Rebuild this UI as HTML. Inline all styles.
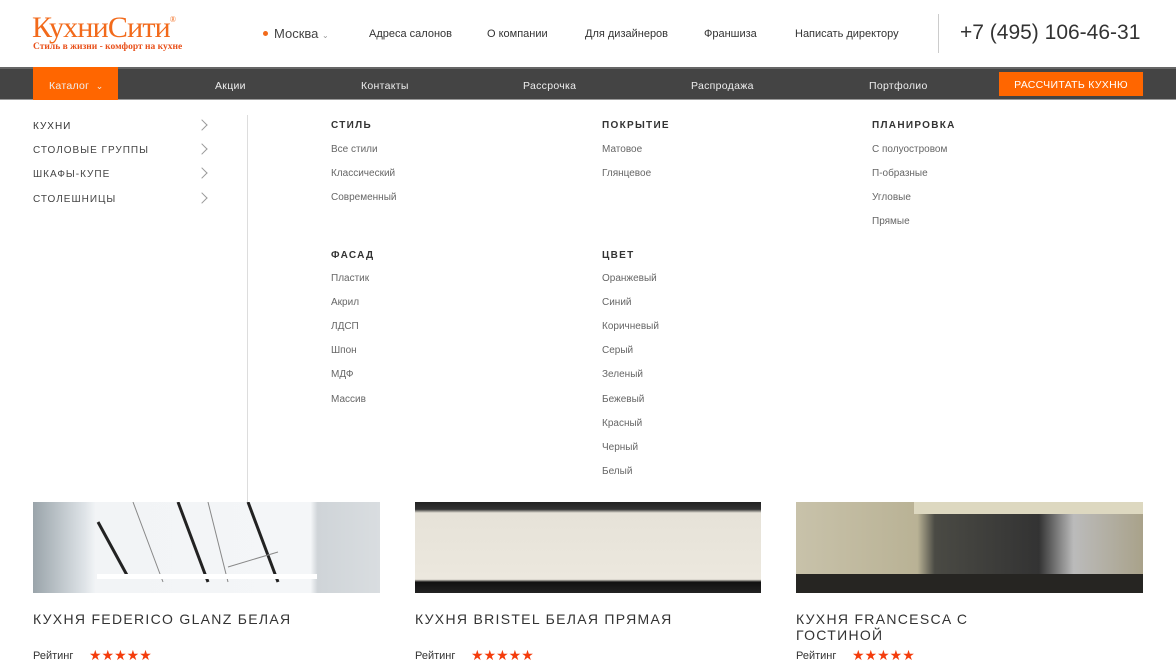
<!DOCTYPE html>
<html><head><meta charset="utf-8"><style>
*{margin:0;padding:0;box-sizing:border-box}
body{width:1176px;height:669px;overflow:hidden;background:#fff;font-family:"Liberation Sans",sans-serif;color:#333;position:relative}
.a{position:absolute;white-space:nowrap}
.top{font-size:11px;color:#333;top:28px}
.nav{position:absolute;top:67px;left:0;width:1176px;height:33px;background:#444;border-top:2px solid #666;border-bottom:1px solid #999}
.nav .a{color:#eee;font-size:10.5px;top:10px;letter-spacing:.3px}
.l{font-size:10px;color:#444;letter-spacing:1px}
.h{font-size:10px;font-weight:bold;letter-spacing:1.3px;color:#333}
.i{font-size:10px;color:#666}
.chev{position:absolute;width:8px;height:8px;border-right:1.5px solid #999;border-top:1.5px solid #999;transform:rotate(45deg)}
.t{font-size:14px;letter-spacing:1.3px;color:#333;top:611px}
.r{font-size:11px;color:#333;top:650px}
.st{color:#f43c0c;font-size:14px;letter-spacing:0;top:647px}
</style></head><body>
<div class="a" style="left:32px;top:11px;font-family:'Liberation Serif',serif;font-size:30px;color:#f26a1b;letter-spacing:-.8px">КухниСити<sup style="font-size:8px;vertical-align:top;position:relative;top:4px">®</sup></div>
<div class="a" style="left:33px;top:42px;font-family:'Liberation Serif',serif;font-size:9.5px;font-weight:bold;color:#e8501a">Стиль в жизни - комфорт на кухне</div>
<div class="a" style="left:263px;top:31px;width:5px;height:5px;border-radius:50%;background:#f26a1b"></div>
<div class="a" style="left:274px;top:26px;font-size:13px;color:#444">Москва <span style="font-size:8px;color:#999">⌄</span></div>
<div class="a top" style="left:369px">Адреса салонов</div>
<div class="a top" style="left:487px">О компании</div>
<div class="a top" style="left:585px">Для дизайнеров</div>
<div class="a top" style="left:704px">Франшиза</div>
<div class="a top" style="left:795px">Написать директору</div>
<div class="a" style="left:938px;top:14px;width:1px;height:39px;background:#ccc"></div>
<div class="a" style="left:960px;top:21px;font-size:21px;color:#333">+7 (495) 106-46-31</div>
<div class="nav">
<div class="a" style="left:33px;top:-2px;width:85px;height:33px;background:#ff6600"></div>
<div class="a" style="left:49px;top:11px">Каталог &nbsp;<span style="font-size:9px">⌄</span></div>
<div class="a" style="left:215px;top:11px">Акции</div>
<div class="a" style="left:361px;top:11px">Контакты</div>
<div class="a" style="left:523px;top:11px">Рассрочка</div>
<div class="a" style="left:691px;top:11px">Распродажа</div>
<div class="a" style="left:869px;top:11px">Портфолио</div>
<div class="a" style="left:999px;top:3px;width:144px;height:24px;background:#ff6600;color:#fff;font-size:10.5px;text-align:center;line-height:26px;letter-spacing:.3px">РАССЧИТАТЬ КУХНЮ</div>
</div>
<div class="a l" style="left:33px;top:121px;color:#333">КУХНИ</div>
<div class="a l" style="left:33px;top:145px">СТОЛОВЫЕ ГРУППЫ</div>
<div class="a l" style="left:33px;top:169px">ШКАФЫ-КУПЕ</div>
<div class="a l" style="left:33px;top:194px">СТОЛЕШНИЦЫ</div>
<div class="chev" style="left:198px;top:121px"></div>
<div class="chev" style="left:198px;top:145px"></div>
<div class="chev" style="left:198px;top:169px"></div>
<div class="chev" style="left:198px;top:194px"></div>
<div class="a" style="left:247px;top:115px;width:1px;height:387px;background:#ddd"></div>
<div class="a h" style="left:331px;top:120px">СТИЛЬ</div>
<div class="a i" style="left:331px;top:144px">Все стили</div>
<div class="a i" style="left:331px;top:168px">Классический</div>
<div class="a i" style="left:331px;top:192px">Современный</div>
<div class="a h" style="left:331px;top:250px">ФАСАД</div>
<div class="a i" style="left:331px;top:273px">Пластик</div>
<div class="a i" style="left:331px;top:297px">Акрил</div>
<div class="a i" style="left:331px;top:321px">ЛДСП</div>
<div class="a i" style="left:331px;top:345px">Шпон</div>
<div class="a i" style="left:331px;top:369px">МДФ</div>
<div class="a i" style="left:331px;top:394px">Массив</div>
<div class="a h" style="left:602px;top:120px">ПОКРЫТИЕ</div>
<div class="a i" style="left:602px;top:144px">Матовое</div>
<div class="a i" style="left:602px;top:168px">Глянцевое</div>
<div class="a h" style="left:602px;top:250px">ЦВЕТ</div>
<div class="a i" style="left:602px;top:273px">Оранжевый</div>
<div class="a i" style="left:602px;top:297px">Синий</div>
<div class="a i" style="left:602px;top:321px">Коричневый</div>
<div class="a i" style="left:602px;top:345px">Серый</div>
<div class="a i" style="left:602px;top:369px">Зеленый</div>
<div class="a i" style="left:602px;top:394px">Бежевый</div>
<div class="a i" style="left:602px;top:418px">Красный</div>
<div class="a i" style="left:602px;top:442px">Черный</div>
<div class="a i" style="left:602px;top:466px">Белый</div>
<div class="a h" style="left:872px;top:120px">ПЛАНИРОВКА</div>
<div class="a i" style="left:872px;top:144px">С полуостровом</div>
<div class="a i" style="left:872px;top:168px">П-образные</div>
<div class="a i" style="left:872px;top:192px">Угловые</div>
<div class="a i" style="left:872px;top:216px">Прямые</div>
<div class="a" style="left:33px;top:502px;width:347px;height:91px;background:linear-gradient(90deg,#9aa4aa,#dfe4e8 15%,#f2f4f6 18%,#f4f6f8 80%,#cfd4d8 82%,#d9dde0);overflow:hidden">
<svg width="347" height="91" style="position:absolute;left:0;top:0"><g stroke="#222" fill="none" stroke-width="3"><path d="M145 0 L175 80"/><path d="M215 0 L245 80"/><path d="M65 20 L95 75"/></g><g stroke="#888" fill="none" stroke-width="1"><path d="M175 0 L195 80M195 65 L245 50M100 0 L130 80"/></g><rect x="64" y="72" width="220" height="5" fill="#fff"/></svg></div>
<div class="a" style="left:415px;top:502px;width:346px;height:91px;background:linear-gradient(180deg,#222 0,#333 8%,#e6e2d8 12%,#ece8de 85%,#111 88%,#222)"></div>
<div class="a" style="left:796px;top:502px;width:347px;height:91px;background:linear-gradient(90deg,#c8c2aa,#b9b295 35%,#4a4a44 40%,#333 70%,#bbb 80%,#a9a28a);overflow:hidden"><div style="position:absolute;left:118px;top:0;width:229px;height:12px;background:#ddd8c0"></div><div style="position:absolute;left:0;top:72px;width:347px;height:19px;background:#262522"></div></div>
<div class="a t" style="left:33px">КУХНЯ FEDERICO GLANZ БЕЛАЯ</div>
<div class="a t" style="left:415px">КУХНЯ BRISTEL БЕЛАЯ ПРЯМАЯ</div>
<div class="a t" style="left:796px;line-height:16px">КУХНЯ FRANCESCA С<br>ГОСТИНОЙ</div>
<div class="a r" style="left:33px">Рейтинг</div><div class="a st" style="left:89px">★★★★★</div>
<div class="a r" style="left:415px">Рейтинг</div><div class="a st" style="left:471px">★★★★★</div>
<div class="a r" style="left:796px">Рейтинг</div><div class="a st" style="left:852px">★★★★★</div>
</body></html>
